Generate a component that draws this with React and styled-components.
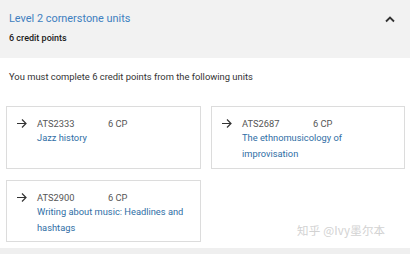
import React from "react";
import styled, { createGlobalStyle } from "styled-components";

const Global = createGlobalStyle`
  html, body { margin: 0; padding: 0; background: #fff; }
  body { font-family: Roboto, "Noto Sans", Arial, sans-serif; width: 410px; height: 254px; overflow: hidden; }
  * { box-sizing: border-box; }
`;

const Page = styled.div`
  position: relative;
  width: 410px;
  height: 254px;
  background: #fff;
  display: flex;
  flex-direction: column;
`;

const Header = styled.div`
  background: #f2f2f2;
  height: 58px;
  padding: 11px 14px 0 9px;
  display: flex;
  justify-content: space-between;
  align-items: flex-start;
`;

const HeaderText = styled.div`
  display: flex;
  flex-direction: column;
`;

const Title = styled.div`
  color: #3f80c0;
  font-size: 10.9px;
  line-height: 16px;
`;

const Sub = styled.div`
  margin-top: 5px;
  color: #1a1a1a;
  font-size: 9px;
  font-weight: 500;
  line-height: 12px;
`;

const Chevron = styled.svg`
  margin-top: 4px;
  width: 12px;
  height: 8px;
`;

const Body = styled.div`
  flex: 1;
  padding: 12px 5px 0 6px;
`;

const Intro = styled.div`
  padding-left: 3px;
  font-size: 9.4px;
  color: #333;
  line-height: 14px;
  margin-bottom: 22px;
`;

const Grid = styled.div`
  display: grid;
  grid-template-columns: 195px 194px;
  column-gap: 10px;
  row-gap: 11px;
`;

const Card = styled.div`
  border: 1px solid #dcdcdc;
  height: ${(p) => p.h}px;
  padding: 10px 8px 0 9px;
  display: flex;
  align-items: flex-start;
`;

const Arrow = styled.svg`
  width: 11px;
  height: 13px;
  margin-right: 10px;
  flex: none;
`;

const Info = styled.div`
  display: flex;
  flex-direction: column;
`;

const Meta = styled.div`
  display: flex;
  font-size: 9.3px;
  line-height: 13px;
  color: #555;
`;

const Code = styled.span`
  width: 71px;
`;

const Name = styled.div`
  font-size: 9.3px;
  line-height: 16px;
  color: #2f6ea5;
`;

const Footer = styled.div`
  height: 6px;
  background: #efefef;
`;

const Watermark = styled.div`
  position: absolute;
  left: 297px;
  top: 222px;
  font-size: 11.5px;
  color: #d2d2d2;
  font-family: "Noto Sans CJK SC", "Noto Sans", sans-serif;
  letter-spacing: 0.2px;
`;

const units = [
  { code: "ATS2333", name: "Jazz history", h: 63 },
  { code: "ATS2687", name: "The ethnomusicology of improvisation", h: 63 },
  { code: "ATS2900", name: "Writing about music: Headlines and hashtags", h: 62 },
];

export default function App() {
  return (
    <Page>
      <Global />
      <Header>
        <HeaderText>
          <Title>Level 2 cornerstone units</Title>
          <Sub>6 credit points</Sub>
        </HeaderText>
        <Chevron viewBox="0 0 12 8">
          <path d="M2 6.5 L6 2.5 L10 6.5" fill="none" stroke="#333" strokeWidth="1.8" />
        </Chevron>
      </Header>
      <Body>
        <Intro>You must complete 6 credit points from the following units</Intro>
        <Grid>
          {units.map((u) => (
            <Card key={u.code} h={u.h}>
              <Arrow viewBox="0 0 11 13">
                <path d="M1 6.5 H10 M6 2.5 L10 6.5 L6 10.5" fill="none" stroke="#333" strokeWidth="1.2" />
              </Arrow>
              <Info>
                <Meta>
                  <Code>{u.code}</Code>
                  <span>6 CP</span>
                </Meta>
                <Name>{u.name}</Name>
              </Info>
            </Card>
          ))}
        </Grid>
      </Body>
      <Footer />
      <Watermark>知乎 @Ivy墨尔本</Watermark>
    </Page>
  );
}
